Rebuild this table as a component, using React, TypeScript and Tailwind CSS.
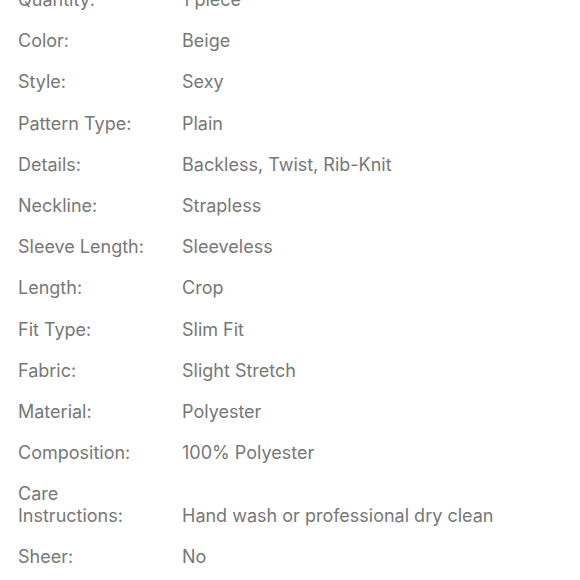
const specs: [string, string][] = [
  ["Quantity:", "1 piece"],
  ["Color:", "Beige"],
  ["Style:", "Sexy"],
  ["Pattern Type:", "Plain"],
  ["Details:", "Backless, Twist, Rib-Knit"],
  ["Neckline:", "Strapless"],
  ["Sleeve Length:", "Sleeveless"],
  ["Length:", "Crop"],
  ["Fit Type:", "Slim Fit"],
  ["Fabric:", "Slight Stretch"],
  ["Material:", "Polyester"],
  ["Composition:", "100% Polyester"],
  ["Care Instructions:", "Hand wash or professional dry clean"],
  ["Sheer:", "No"],
];

export default function App() {
  return (
    <div className="h-[580px] overflow-hidden bg-white">
      <div
        className="-mt-[11px] flex flex-col gap-[19.2px] pl-[18px] text-[18px] leading-[22px] text-[#777777]"
        style={{ fontFamily: 'Inter, "Liberation Sans", sans-serif' }}
      >
        {specs.map(([label, value]) => (
          <div key={label} className="flex items-end">
            <div className="w-[150px] shrink-0">{label}</div>
            <div className="ml-[14px]">{value}</div>
          </div>
        ))}
      </div>
    </div>
  );
}
